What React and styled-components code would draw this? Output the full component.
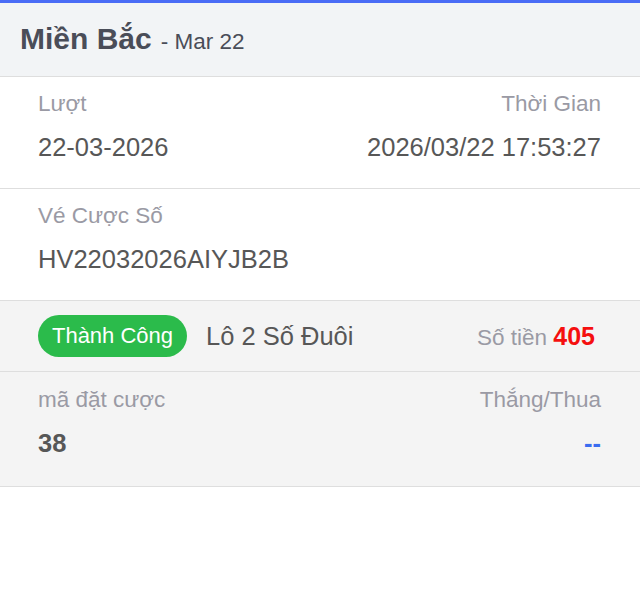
import React from 'react';
import styled, { createGlobalStyle } from 'styled-components';

const GlobalStyle = createGlobalStyle`
  html, body {
    margin: 0;
    padding: 0;
    background: #fff;
    font-family: "Liberation Sans", Arial, sans-serif;
  }
`;

const Page = styled.div`
  width: 640px;
  border-top: 3px solid #4a6cf6;
`;

const Header = styled.div`
  display: flex;
  align-items: baseline;
  gap: 9px;
  height: 74px;
  padding: 0 20px;
  box-sizing: border-box;
  line-height: 72px;
  background: #f2f4f6;
  border-bottom: 1px solid #dedede;
`;

const Title = styled.span`
  font-size: 30px;
  font-weight: 700;
  color: #4a4d58;
`;

const SubTitle = styled.span`
  font-size: 22.5px;
  color: #4a4d58;
`;

const Section = styled.div`
  display: grid;
  grid-template-columns: 1fr auto;
  row-gap: 14px;
  padding: ${(props) => (props.grey ? '14px 39px 28px 38px' : '13px 39px 26px 38px')};
  background: ${(props) => (props.grey ? '#f4f4f4' : '#fff')};
  border-bottom: 1px solid #dedede;
`;

const Label = styled.div`
  font-size: 22.5px;
  line-height: 28px;
  color: #9a9aa4;
  text-align: ${(props) => (props.right ? 'right' : 'left')};
`;

const Value = styled.div`
  font-size: 25.5px;
  line-height: 30px;
  color: ${(props) => props.color || '#575757'};
  font-weight: ${(props) => (props.bold ? 700 : 400)};
  text-align: ${(props) => (props.right ? 'right' : 'left')};
`;

const StatusRow = styled.div`
  display: flex;
  align-items: center;
  height: 70px;
  padding: 0 45px 0 38px;
  background: #f4f4f4;
  border-bottom: 1px solid #dedede;
`;

const Badge = styled.span`
  display: inline-flex;
  align-items: center;
  justify-content: center;
  height: 42px;
  width: 149px;
  border-radius: 21px;
  background: #2bbb4b;
  color: #fff;
  font-size: 22px;
`;

const BetType = styled.span`
  margin-left: 19px;
  font-size: 25.5px;
  color: #575757;
  flex: 1;
`;

const Amount = styled.span`
  font-size: 22.5px;
  color: #9a9aa4;

  b {
    font-size: 25px;
    color: #f50f0f;
  }
`;

export default function App() {
  return (
    <>
      <GlobalStyle />
      <Page>
        <Header>
          <Title>Miền Bắc</Title>
          <SubTitle>- Mar 22</SubTitle>
        </Header>

        <Section>
          <Label>Lượt</Label>
          <Label right>Thời Gian</Label>
          <Value>22-03-2026</Value>
          <Value right>2026/03/22 17:53:27</Value>
        </Section>

        <Section>
          <Label>Vé Cược Số</Label>
          <Label />
          <Value>HV22032026AIYJB2B</Value>
          <Value />
        </Section>

        <StatusRow>
          <Badge>Thành Công</Badge>
          <BetType>Lô 2 Số Đuôi</BetType>
          <Amount>
            Số tiền <b>405</b>
          </Amount>
        </StatusRow>

        <Section grey>
          <Label>mã đặt cược</Label>
          <Label right>Thắng/Thua</Label>
          <Value bold>38</Value>
          <Value bold right color='#3a6cf0'>--</Value>
        </Section>
      </Page>
    </>
  );
}
